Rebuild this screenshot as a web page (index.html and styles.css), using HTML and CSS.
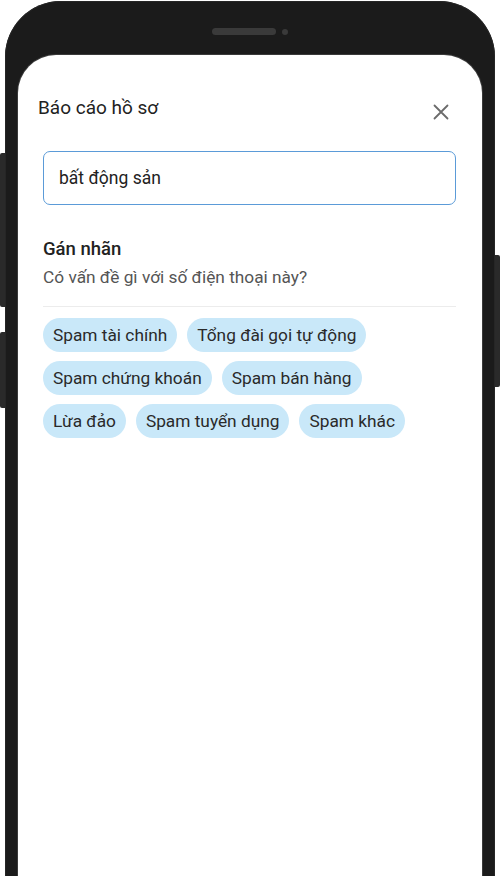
FILE: index.html
```html
<!DOCTYPE html>
<html lang="vi">
<head>
<meta charset="utf-8">
<title>Báo cáo hồ sơ</title>
<link rel="stylesheet" href="styles.css">
</head>
<body>
<div class="page">
  <div class="btn btn-left-1"></div>
  <div class="btn btn-left-2"></div>
  <div class="btn btn-right"></div>
  <div class="phone">
    <div class="speaker-row">
      <span class="speaker"></span>
      <span class="camera"></span>
    </div>
    <div class="screen">
      <div class="header">
        <h1 class="title">Báo cáo hồ sơ</h1>
        <span class="close" aria-label="Đóng">
          <svg width="16" height="16" viewBox="0 0 16 16"><path d="M1.5 1.5 L14.5 14.5 M14.5 1.5 L1.5 14.5" stroke="#6b6b6b" stroke-width="1.8" stroke-linecap="round" fill="none"/></svg>
        </span>
      </div>
      <div class="content">
        <div class="input">bất động sản</div>
        <h2 class="section-title">Gán nhãn</h2>
        <p class="section-sub">Có vấn đề gì với số điện thoại này?</p>
        <div class="divider"></div>
        <div class="chips">
          <div class="chip-row">
            <span class="chip">Spam tài chính</span>
            <span class="chip">Tổng đài gọi tự động</span>
          </div>
          <div class="chip-row">
            <span class="chip">Spam chứng khoán</span>
            <span class="chip">Spam bán hàng</span>
          </div>
          <div class="chip-row">
            <span class="chip">Lừa đảo</span>
            <span class="chip">Spam tuyển dụng</span>
            <span class="chip">Spam khác</span>
          </div>
        </div>
      </div>
    </div>
  </div>
</div>
</body>
</html>
```

FILE: styles.css
```css
* { box-sizing: border-box; }
html, body { margin: 0; padding: 0; background: #ffffff; }
body { font-family: Roboto, "Noto Sans", "Liberation Sans", sans-serif; color: #222; }

.page {
  position: relative;
  width: 500px;
  height: 876px;
  overflow: hidden;
  background: #ffffff;
}

.btn {
  position: absolute;
  background: #2a2a2a;
  width: 10px;
}
.btn-left-1 { left: 0; top: 153px; height: 154px; border-radius: 2px 0 0 2px; }
.btn-left-2 { left: 0; top: 332px; height: 76px; border-radius: 2px 0 0 2px; }
.btn-right { right: 0; top: 255px; height: 132px; border-radius: 0 2px 2px 0; }

.phone {
  position: relative;
  margin: 1px 0 0 5px;
  width: 490px;
  height: 920px;
  background: #1b1b1b;
  border-radius: 56px 56px 0 0;
  padding: 27px 13px 0 13px;
  box-shadow: inset 0 0 0 1px #262626;
}

.speaker-row {
  height: 7px;
  display: flex;
  justify-content: center;
  align-items: center;
  gap: 6px;
  margin-bottom: 20px;
}
.speaker {
  width: 64px;
  height: 7px;
  border-radius: 4px;
  background: #3a3a3a;
}
.camera {
  width: 6px;
  height: 6px;
  border-radius: 50%;
  background: #3a3a3a;
}

.screen {
  background: #ffffff;
  border-radius: 38px 38px 0 0;
  height: 860px;
  box-shadow: 0 0 0 1px #3a3a3a;
}

.header {
  display: flex;
  justify-content: space-between;
  align-items: center;
  padding: 38px 33px 0 20px;
  height: 68px;
}
.title {
  margin: 0;
  font-size: 19px;
  font-weight: 400;
  line-height: 30px;
  color: #222;
}
.close {
  display: flex;
  width: 16px;
  height: 16px;
  margin-top: 8px;
}

.content {
  padding: 28px 26px 0 25px;
}

.input {
  height: 54px;
  border: 1.5px solid #5b9bd8;
  border-radius: 7px;
  padding: 0 15px;
  display: flex;
  align-items: center;
  font-size: 17.5px;
  color: #222;
}

.section-title {
  margin: 32px 0 4px 0;
  font-size: 18.5px;
  font-weight: 500;
  line-height: 24px;
  color: #222;
}
.section-sub {
  margin: 0;
  font-size: 17.3px;
  line-height: 24px;
  color: #555;
}

.divider {
  height: 1px;
  background: #ececec;
  margin: 17px 0 11px 0;
}

.chips {
  display: flex;
  flex-direction: column;
  gap: 9px;
}
.chip-row {
  display: flex;
  gap: 10px;
}
.chip {
  height: 34px;
  line-height: 34px;
  padding: 0 10px;
  border-radius: 17px;
  background: #c9e8f9;
  font-size: 17.3px;
  color: #2a2a2a;
  white-space: nowrap;
}
```
